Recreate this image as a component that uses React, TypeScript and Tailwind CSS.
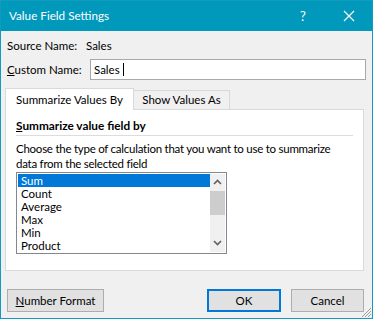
import React from "react";

const font = { fontFamily: 'Lato, "Liberation Sans", Arial, sans-serif' };

export default function App() {
  const items = ["Sum", "Count", "Average", "Max", "Min", "Product"];
  return (
    <div
      className="w-[373px] h-[319px] border border-[#0f9cc0] bg-[#f0f0f0] flex flex-col text-[11.5px] text-black leading-none overflow-hidden whitespace-nowrap"
      style={font}
    >
      {/* title bar */}
      <div className="h-[30px] bg-[#0099bc] flex items-center text-white shrink-0">
        <div className="pl-[8px] text-[11.7px] flex-1">Value Field Settings</div>
        <div className="w-[46px] text-center text-[13px]">?</div>
        <div className="w-[46px] flex items-center justify-center">
          <svg width="12" height="12" viewBox="0 0 12 12">
            <path d="M1 1 L11 11 M11 1 L1 11" stroke="white" strokeWidth="1.2" fill="none" />
          </svg>
        </div>
      </div>

      {/* source name */}
      <div className="flex items-center h-[28px] pl-[6px] pt-[1px] shrink-0">
        <span className="w-[79px] shrink-0">Source Name:</span>
        <span>Sales</span>
      </div>

      {/* custom name */}
      <div className="flex items-center h-[21px] pl-[6px] pr-[6px] shrink-0">
        <span className="w-[83px] shrink-0">
          <span className="underline">C</span>ustom Name:
        </span>
        <div className="flex-1 h-[21px] bg-white border border-[#a9a9a9] flex items-center pl-[3px]">
          Sales
          <span className="inline-block w-[1px] h-[13px] bg-black ml-[3px]" />
        </div>
      </div>

      {/* tabs */}
      <div className="flex items-end h-[29px] pl-[4px] shrink-0">
        <div className="w-[129px] h-[22px] bg-white border border-[#d9d9d9] border-b-0 flex items-center justify-center relative z-10 -mb-[1px] pt-[1px] shrink-0">
          Summarize Values By
        </div>
        <div className="w-[96px] h-[19px] bg-[#f0f0f0] border border-[#d9d9d9] border-l-0 border-b-0 flex items-center justify-center shrink-0">
          Show Values As
        </div>
      </div>

      {/* panel */}
      <div className="mx-[4px] w-[359px] h-[162px] bg-white border border-[#d9d9d9] px-[10px] pt-[10px] shrink-0">
        <div className="font-bold text-[11.8px]">
          <span className="underline">S</span>ummarize value field by
        </div>
        <div className="h-[1px] bg-[#dcdcdc] mt-[3px]" />
        <div className="mt-[5px] leading-[15px] tracking-[-0.25px]">
          Choose the type of calculation that you want to use to summarize
          <br />
          data from the selected field
        </div>
        <div className="mt-[1px] w-[211px] h-[82px] border border-[#828790] flex p-[1px]">
          <div className="flex-1 flex flex-col">
            {items.map((it, i) => (
              <div
                key={it}
                className={
                  "h-[13px] leading-[13px] flex items-center pl-[3px] " +
                  (i === 0 ? "bg-[#0078d7] text-white" : "")
                }
              >
                {it}
              </div>
            ))}
          </div>
          <div className="w-[15px] bg-[#f0f0f0] flex flex-col items-center">
            <div className="h-[17px] flex items-center justify-center">
              <svg width="9" height="6" viewBox="0 0 9 6">
                <path d="M1 5 L4.5 1.5 L8 5" stroke="#606060" strokeWidth="1.6" fill="none" />
              </svg>
            </div>
            <div className="w-[15px] h-[24px] bg-[#cdcdcd]" />
            <div className="flex-1" />
            <div className="h-[17px] flex items-center justify-center">
              <svg width="9" height="6" viewBox="0 0 9 6">
                <path d="M1 1 L4.5 4.5 L8 1" stroke="#606060" strokeWidth="1.6" fill="none" />
              </svg>
            </div>
          </div>
        </div>
      </div>

      {/* buttons */}
      <div className="flex items-center mt-[18px] pl-[6px] pr-[8px] shrink-0">
        <div className="w-[97px] h-[23px] bg-[#e1e1e1] border border-[#adadad] flex items-center justify-center">
          <span>
            <span className="underline">N</span>umber Format
          </span>
        </div>
        <div className="flex-1" />
        <div className="w-[74px] h-[23px] bg-[#e1e1e1] border-2 border-[#0078d7] flex items-center justify-center">
          OK
        </div>
        <div className="w-[73px] h-[23px] bg-[#e1e1e1] border border-[#adadad] flex items-center justify-center ml-[10px]">
          Cancel
        </div>
      </div>
      <div className="flex-1 relative">
        <svg className="absolute right-0 bottom-0" width="10" height="10" viewBox="0 0 10 10">
          <path d="M9 3 L3 9 M9 6 L6 9 M9 0 L0 9" stroke="#a0a0a0" strokeWidth="1" fill="none" />
        </svg>
      </div>
    </div>
  );
}
